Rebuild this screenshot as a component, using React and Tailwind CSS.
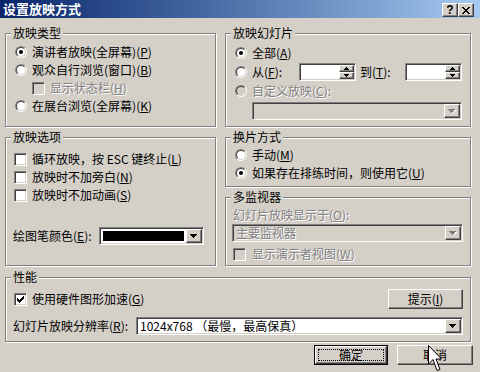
import React from 'react';

const raised =
  'border border-t-white border-l-white border-b-[#404040] border-r-[#404040] shadow-[inset_-1px_-1px_0_#808080]';
const sunken =
  'border border-t-[#808080] border-l-[#808080] border-b-white border-r-white shadow-[inset_1px_1px_0_#404040,inset_-1px_-1px_0_#d4d0c8]';
const dim = 'text-[#808080] [text-shadow:1px_1px_0_#fff]';

const M = ({ c }) => (
  <>
    (<span className="underline underline-offset-[1px]">{c}</span>)
  </>
);

const Radio = ({ checked, disabled }) => (
  <span className="relative inline-block w-[12px] h-[12px] shrink-0 rounded-full border border-t-[#808080] border-l-[#808080] border-b-white border-r-white">
    <span
      className={`absolute inset-0 rounded-full border border-t-[#404040] border-l-[#404040] border-b-[#d4d0c8] border-r-[#d4d0c8] ${
        disabled ? 'bg-[#d4d0c8]' : 'bg-white'
      }`}
    />
    {checked && <span className="absolute left-[3px] top-[3px] w-[4px] h-[4px] rounded-full bg-black" />}
  </span>
);

const Check = ({ checked, disabled }) => (
  <span
    className={`inline-flex items-center justify-center w-[13px] h-[13px] shrink-0 ${sunken} ${
      disabled ? 'bg-[#d4d0c8]' : 'bg-white'
    }`}
  >
    {checked && (
      <svg width="7" height="7" viewBox="0 0 7 7" shapeRendering="crispEdges">
        <path d="M6 0h1v1h-1z M5 1h2v1h-2z M0 2h1v1h-1z M4 2h3v1h-3z M0 3h2v1h-2z M3 3h3v1h-3z M0 4h5v1h-5z M1 5h3v1h-3z M2 6h1v1h-1z" />
      </svg>
    )}
  </span>
);

const Arrow = ({ disabled }) => (
  <svg width="8" height="5" viewBox="0 0 8 5" shapeRendering="crispEdges">
    {disabled && <path d="M1 1h7v1h-1v1h-1v1h-1v1h-1v-1h1v-1h1v-1h1z" fill="#fff" />}
    <path d="M0 0h7v1h-1v1h-1v1h-1v1h-1v-1h-1v-1h-1v-1h-1z" fill={disabled ? '#808080' : '#000'} />
  </svg>
);

const Combo = ({ children, disabled, className = '' }) => (
  <div className={`flex h-[18px] p-[1px] ${sunken} ${disabled ? 'bg-[#d4d0c8]' : 'bg-white'} ${className}`}>
    <div className="flex-1 flex items-center pl-[2px] whitespace-nowrap leading-[12px]">{children}</div>
    <div className={`w-[16px] h-full flex items-center justify-center bg-[#d4d0c8] ${raised}`}>
      <Arrow disabled={disabled} />
    </div>
  </div>
);

const Spin = ({ className = '' }) => (
  <div className={`flex h-[18px] p-[1px] bg-white ${sunken} ${className}`}>
    <div className="flex-1" />
    <div className="w-[15px] flex flex-col">
      <div className={`flex-1 flex items-center justify-center bg-[#d4d0c8] ${raised}`}>
        <svg width="5" height="3" viewBox="0 0 5 3" shapeRendering="crispEdges">
          <path d="M2 0h1v1h1v1h1v1h-5v-1h1v-1h1z" />
        </svg>
      </div>
      <div className={`flex-1 flex items-center justify-center bg-[#d4d0c8] ${raised}`}>
        <svg width="5" height="3" viewBox="0 0 5 3" shapeRendering="crispEdges">
          <path d="M0 0h5v1h-1v1h-1v1h-1v-1h-1v-1h-1z" />
        </svg>
      </div>
    </div>
  </div>
);

const Group = ({ title, className = '', children }) => (
  <div className={`relative border border-[#808080] shadow-[inset_1px_1px_0_#fff,1px_1px_0_#fff] ${className}`}>
    <span className="absolute -top-[8px] left-[5px] px-[2px] bg-[#d4d0c8] leading-[14px]">{title}</span>
    {children}
  </div>
);

const Row = ({ className = '', children }) => (
  <div className={`flex items-center h-[18px] whitespace-nowrap ${className}`}>{children}</div>
);

const Button = ({ children, className = '' }) => (
  <div className={`flex items-center justify-center h-[20px] bg-[#d4d0c8] ${raised} ${className}`}>{children}</div>
);

const CapBtn = ({ children }) => (
  <div className={`flex items-center justify-center w-[16px] h-[14px] bg-[#d4d0c8] ${raised}`}>{children}</div>
);

export default function App() {
  return (
    <div className="relative w-[480px] h-[372px] overflow-hidden bg-[#d4d0c8] text-[12px] leading-[14px] text-black font-['Noto_Sans_CJK_SC',sans-serif]">
      {/* title bar */}
      <div className="flex items-start h-[18px] bg-linear-to-r from-[#0a246a] to-[#a6caf0]">
        <span className="pl-[3px] pt-[2px] font-bold text-[13px] text-white">设置放映方式</span>
        <div className="ml-auto mr-[6px] mt-[3px] flex">
          <CapBtn>
            <span className="font-bold text-[12px] leading-[12px] font-['Liberation_Sans',sans-serif]">?</span>
          </CapBtn>
          <CapBtn>
            <svg width="8" height="7" viewBox="0 0 8 7" shapeRendering="crispEdges">
              <path d="M0 0h2v1h-2z M6 0h2v1h-2z M1 1h2v1h-2z M5 1h2v1h-2z M2 2h4v1h-4z M3 3h2v1h-2z M2 4h4v1h-4z M1 5h2v1h-2z M5 5h2v1h-2z M0 6h2v1h-2z M6 6h2v1h-2z" />
            </svg>
          </CapBtn>
        </div>
      </div>

      <div className="pl-[5px] pt-[15px]">
        <div className="flex gap-[9px]">
          <Group title="放映类型" className="w-[211px] h-[94px] pl-[9px] pt-[9px]">
            <Row>
              <Radio checked />
              <span className="ml-[5px]">演讲者放映(全屏幕)<M c="P" /></span>
            </Row>
            <Row>
              <Radio />
              <span className="ml-[5px]">观众自行浏览(窗口)<M c="B" /></span>
            </Row>
            <Row className="ml-[17px]">
              <Check disabled />
              <span className={`ml-[5px] ${dim}`}>显示状态栏<M c="H" /></span>
            </Row>
            <Row>
              <Radio />
              <span className="ml-[5px]">在展台浏览(全屏幕)<M c="K" /></span>
            </Row>
          </Group>

          <Group title="放映幻灯片" className="w-[246px] h-[94px] pl-[9px] pt-[9px]">
            <Row className="h-[19px]">
              <Radio checked />
              <span className="ml-[5px]">全部<M c="A" /></span>
            </Row>
            <Row className="h-[19px]">
              <Radio />
              <span className="ml-[5px] w-[47px]">从<M c="F" />:</span>
              <Spin className="w-[57px]" />
              <span className="pl-[4px] w-[49px]">到<M c="T" />:</span>
              <Spin className="w-[57px]" />
            </Row>
            <Row className="h-[19px]">
              <Radio disabled />
              <span className={`ml-[5px] ${dim}`}>自定义放映<M c="C" />:</span>
            </Row>
            <Combo disabled className="ml-[17px] mt-[2px] w-[210px]" />
          </Group>
        </div>

        <div className="flex gap-[9px] mt-[10px]">
          <Group title="放映选项" className="w-[211px] h-[129px] pl-[8px] pt-[12px]">
            <Row>
              <Check />
              <span className="ml-[5px]">循环放映，按 ESC 键终止<M c="L" /></span>
            </Row>
            <Row>
              <Check />
              <span className="ml-[5px]">放映时不加旁白<M c="N" /></span>
            </Row>
            <Row>
              <Check />
              <span className="ml-[5px]">放映时不加动画<M c="S" /></span>
            </Row>
            <Row className="mt-[23px]">
              <span className="w-[86px] -ml-[1px]">绘图笔颜色<M c="E" />:</span>
              <Combo className="w-[105px]">
                <div className="w-full h-[10px] mr-[2px] bg-black" />
              </Combo>
            </Row>
          </Group>

          <div className="flex flex-col w-[246px]">
            <Group title="换片方式" className="h-[50px] pl-[9px] pt-[8px]">
              <Row>
                <Radio />
                <span className="ml-[5px]">手动<M c="M" /></span>
              </Row>
              <Row>
                <Radio checked />
                <span className="ml-[5px]">如果存在排练时间，则使用它<M c="U" /></span>
              </Row>
            </Group>
            <Group title="多监视器" className="h-[69px] mt-[10px] pl-[6px] pt-[8px]">
              <Row>
                <span className={`ml-[1px] ${dim}`}>幻灯片放映显示于<M c="O" />:</span>
              </Row>
              <Combo disabled className="w-[231px]">
                <span className={dim}>主要监视器</span>
              </Combo>
              <Row className="mt-[3px] ml-[1px]">
                <Check disabled />
                <span className={`ml-[6px] ${dim}`}>显示演示者视图<M c="W" /></span>
              </Row>
            </Group>
          </div>
        </div>

        <Group title="性能" className="w-[466px] h-[65px] mt-[11px] pl-[8px] pr-[7px] pt-[11px]">
          <div className="flex items-center h-[20px]">
            <Check checked />
            <span className="ml-[5px]">使用硬件图形加速<M c="G" /></span>
            <Button className="ml-auto w-[75px]">提示<M c="I" /></Button>
          </div>
          <Row className="mt-[8px]">
            <span className="w-[123px] -ml-[1px]">幻灯片放映分辨率<M c="R" />:</span>
            <Combo className="flex-1">
              <span>1024x768 （最慢，最高保真）</span>
            </Combo>
          </Row>
        </Group>

        <div className="flex justify-end gap-[9px] pr-[7px] mt-[3px]">
          <div className="w-[74px] h-[20px] border border-black">
            <div className={`h-full p-[2px] bg-[#d4d0c8] ${raised}`}>
              <div className="h-full flex items-center justify-center border border-dotted border-black">确定</div>
            </div>
          </div>
          <Button className="w-[76px]">取消</Button>
        </div>
      </div>

      {/* mouse pointer */}
      <svg className="absolute left-[428px] top-[345px]" width="16" height="28" viewBox="0 0 16 28">
        <path d="M0.5 0.5 L0.5 19 L5 14.5 L9 25.5 L12 24.5 L8 14 L13.5 14 Z" fill="#fff" stroke="#000" strokeWidth="1" />
      </svg>
    </div>
  );
}
